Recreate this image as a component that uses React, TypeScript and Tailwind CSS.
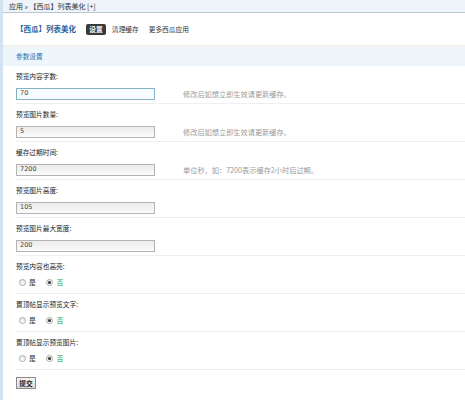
const TIP_CACHE = '修改后如想立即生效请更新缓存。'

const TEXT_FIELDS = [
  { label: '预览内容字数:', value: '70', tip: TIP_CACHE, focus: true },
  { label: '预览图片数量:', value: '5', tip: TIP_CACHE },
  { label: '缓存过期时间:', value: '7200', tip: '单位秒，如：7200表示缓存2小时后过期。' },
  { label: '预览图片高度:', value: '105' },
  { label: '预览图片最大宽度:', value: '200' },
]

const SWITCHES = ['预览内容也高亮:', '置顶帖显示预览文字:', '置顶帖显示预览图片:']

function Radio({ checked }: { checked?: boolean }) {
  return (
    <span className="flex h-[7px] w-[7px] items-center justify-center rounded-full border border-[#a9a9a9] bg-gradient-to-b from-[#e6e6e6] to-white">
      {checked && <span className="h-[3px] w-[3px] rounded-full bg-[#333]" />}
    </span>
  )
}

function TextRow({ label, value, tip, focus }: { label: string; value: string; tip?: string; focus?: boolean }) {
  return (
    <div className="border-b border-[#efefef] pb-[3px] pt-[4px]">
      <div className="h-[12px] text-[6.7px] leading-[12px] text-[#222]">{label}</div>
      <div className="mt-[6px] flex h-[12px] items-center">
        <div
          className={`flex h-[12px] w-[139px] items-center border px-[3px] font-['DejaVu_Sans',sans-serif] text-[6.5px] font-normal text-[#444] ${
            focus ? 'border-[#86b3c4] bg-[#f5fbff]' : 'border-[#b4b4b4] bg-gradient-to-b from-[#ececec] to-[#fafafa]'
          }`}
        >
          {value}
        </div>
        {tip && <span className="ml-[28px] text-[7.2px] text-[#9a9a9a]">{tip}</span>}
      </div>
    </div>
  )
}

function SwitchRow({ label }: { label: string }) {
  return (
    <div className="border-b border-[#efefef] pb-[5px] pt-[4px]">
      <div className="h-[12px] text-[6.7px] leading-[12px] text-[#222]">{label}</div>
      <div className="mt-[4px] flex h-[12px] items-center pl-[3px] text-[6.7px]">
        <Radio />
        <span className="ml-[3px] text-[#222]">是</span>
        <span className="ml-[10px]">
          <Radio checked />
        </span>
        <span className="ml-[4px] text-[#2a9a2a]">否</span>
      </div>
    </div>
  )
}

export default function App() {
  return (
    <div className="h-[400px] w-[465px] overflow-hidden border-l-[3px] border-[#d3e3f1] bg-white font-['Noto_Sans_CJK_SC',sans-serif]">
      {/* breadcrumb */}
      <div className="flex h-[13px] items-center border-b border-[#b9c7d1] bg-[#eef4fa] pl-[6px] text-[7px] text-[#333]">
        应用 » 【西瓜】列表美化 [+]
      </div>

      {/* title + tabs */}
      <div className="flex h-[33px] items-center border-b border-[#f3eedc] pl-[13px] text-[6.7px]">
        <span className="text-[7.5px] font-bold text-[#1d5f9e]">【西瓜】列表美化</span>
        <span className="ml-[10px] flex h-[11px] w-[20px] items-center justify-center rounded-[2px] bg-[#3a3a3a] font-bold text-white">
          设置
        </span>
        <span className="ml-[6px] text-[#333]">清理缓存</span>
        <span className="ml-[10px] text-[#333]">更多西瓜应用</span>
      </div>

      {/* section header */}
      <div className="flex h-[20px] items-center bg-[#eef5fb] pl-[13px] text-[6.7px] text-[#1f74b6]">参数设置</div>

      <div className="pl-[13px]">
        {TEXT_FIELDS.map((f) => (
          <TextRow key={f.label} {...f} />
        ))}
        {SWITCHES.map((s) => (
          <SwitchRow key={s} label={s} />
        ))}
        <div className="pt-[7px]">
          <button className="flex h-[12px] w-[20px] items-center justify-center border border-[#8a8a8a] bg-gradient-to-b from-[#f6f6f6] to-[#dcdcdc] text-[6.7px] font-bold text-[#222]">
            提交
          </button>
        </div>
      </div>
    </div>
  )
}
